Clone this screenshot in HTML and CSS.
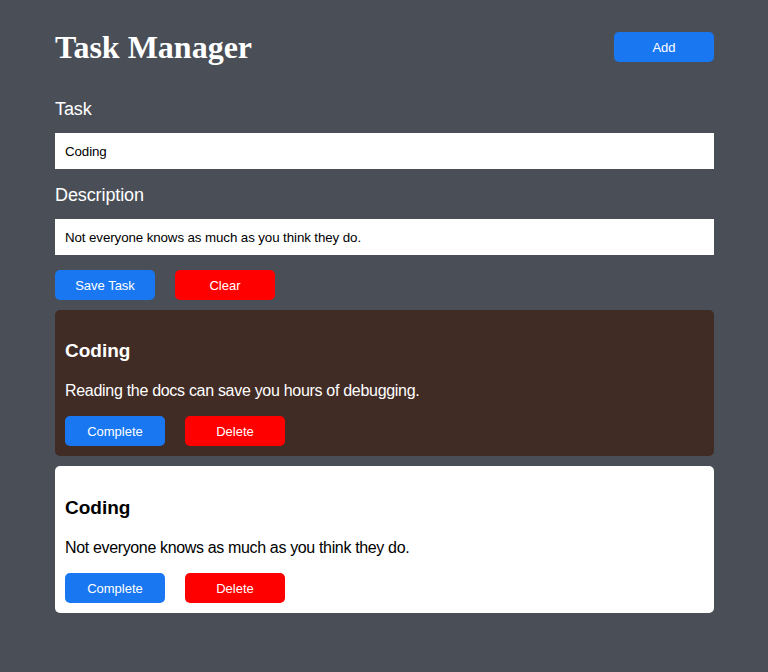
FILE: index.html
```html
<!DOCTYPE html>
<html lang="en">
<head>
<meta charset="utf-8">
<title>Task Manager</title>
<link rel="stylesheet" href="styles.css">
</head>
<body>
<div class="page">
  <header class="header">
    <h1 class="title">Task Manager</h1>
    <button class="btn btn-blue">Add</button>
  </header>
  <form class="form">
    <label class="label" for="task">Task</label>
    <input class="input" id="task" type="text" value="Coding">
    <label class="label" for="desc">Description</label>
    <input class="input" id="desc" type="text" value="Not everyone knows as much as you think they do.">
    <div class="actions">
      <button type="button" class="btn btn-blue">Save Task</button>
      <button type="button" class="btn btn-red">Clear</button>
    </div>
  </form>
  <div class="list">
    <div class="card card-done">
      <h3 class="card-title">Coding</h3>
      <p class="card-text">Reading the docs can save you hours of debugging.</p>
      <div class="actions">
        <button class="btn btn-blue">Complete</button>
        <button class="btn btn-red">Delete</button>
      </div>
    </div>
    <div class="card">
      <h3 class="card-title">Coding</h3>
      <p class="card-text">Not everyone knows as much as you think they do.</p>
      <div class="actions">
        <button class="btn btn-blue">Complete</button>
        <button class="btn btn-red">Delete</button>
      </div>
    </div>
  </div>
</div>
</body>
</html>
```
FILE: styles.css
```css
html, body {
  margin: 0;
  padding: 0;
  background: #4a4f57;
  height: 100%;
}
body {
  font-family: "Liberation Sans", Arial, sans-serif;
}
.page {
  width: 659px;
  margin: 0 auto 0 55px;
  padding-top: 29px;
}
.header {
  display: flex;
  justify-content: space-between;
  align-items: center;
  margin-bottom: 18px;
}
.title {
  margin: 0;
  font-family: "Liberation Serif", "Times New Roman", serif;
  font-weight: bold;
  font-size: 32px;
  line-height: 36px;
  color: #ffffff;
}
.form {
  display: flex;
  flex-direction: column;
}
.label {
  display: block;
  font-size: 18px;
  line-height: 21px;
  color: #ffffff;
  margin: 16px 0 13px;
  letter-spacing: -0.1px;
}
.input {
  box-sizing: border-box;
  width: 100%;
  height: 36px;
  border: 0;
  margin: 0;
  padding: 0 10px;
  background: #ffffff;
  color: #000000;
  font-family: "Liberation Sans", Arial, sans-serif;
  font-size: 13.33px;
  letter-spacing: -0.1px;
  outline: none;
}
.actions {
  display: flex;
  gap: 20px;
}
.form .actions {
  margin-top: 15px;
}
.btn {
  box-sizing: border-box;
  width: 100px;
  height: 30px;
  border: 0;
  border-radius: 5px;
  padding: 0;
  color: #ffffff;
  font-family: "Liberation Sans", Arial, sans-serif;
  font-size: 13px;
  cursor: pointer;
}
.btn-blue {
  background: #1a77f2;
}
.btn-red {
  background: #ff0000;
}
.list {
  display: flex;
  flex-direction: column;
  gap: 10px;
  margin-top: 10px;
}
.card {
  box-sizing: border-box;
  height: 146px;
  background: #ffffff;
  color: #000000;
  border-radius: 5px;
  padding: 10px;
}
.card + .card {
  height: 147px;
}
.card-done {
  background: #412b25;
  color: #ffffff;
}
.card-title {
  margin: 20px 0 0;
  font-size: 19px;
  line-height: 22px;
  font-weight: bold;
}
.card-text {
  margin: 20px 0 16px;
  font-size: 16px;
  line-height: 18px;
  letter-spacing: -0.3px;
}
.card + .card .card-title {
  margin-top: 21px;
}
.card + .card .card-text {
  letter-spacing: -0.35px;
}
```
